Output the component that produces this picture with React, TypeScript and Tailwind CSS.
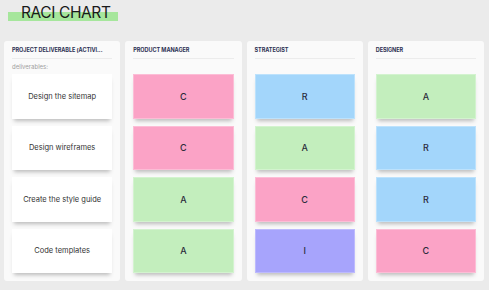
import React from 'react';

type Role = 'R' | 'A' | 'C' | 'I';

const roleStyle: Record<Role, string> = {
  R: 'bg-[#a3d6fb] border-[#bde2fc]',
  A: 'bg-[#c3eebd] border-[#d3f3cf]',
  C: 'bg-[#fba3c6] border-[#fcbdd6]',
  I: 'bg-[#a7a4fc] border-[#bdbafd]',
};

const tasks = ['Design the sitemap', 'Design wireframes', 'Create the style guide', 'Code templates'];

const columns: { title: string; roles: Role[] }[] = [
  { title: 'PRODUCT MANAGER', roles: ['C', 'C', 'A', 'A'] },
  { title: 'STRATEGIST', roles: ['R', 'A', 'C', 'I'] },
  { title: 'DESIGNER', roles: ['A', 'R', 'R', 'C'] },
];

const Panel = ({ title, sub, children }: { title: string; sub?: string; children: React.ReactNode }) => (
  <div className="flex-1 min-w-0 bg-[#fafafa] rounded-[3px] px-2 pb-2 flex flex-col">
    <div className="pt-[5px] pb-[5px] border-b border-[#ececec] h-[18px]">
      <p className="text-[5.5px] leading-[8px] font-bold text-[#2d3154] tracking-[-0.05px] whitespace-nowrap">
        {title}
      </p>
    </div>
    <div className="h-[15px] flex items-center">
      {sub && <p className="text-[6px] text-[#a0a0a0]">{sub}</p>}
    </div>
    <div className="flex flex-col gap-[7px]">{children}</div>
  </div>
);

const App = () => {
  return (
    <div className="w-[489px] h-[290px] bg-[#ebebeb] overflow-hidden font-['Inter',sans-serif]">
      <div className="h-[41px]">
        <span className="inline-block mt-[3px] ml-[8px] pl-[13px] pr-[7px] text-[15.5px] tracking-[-0.4px] leading-[20px] text-[#1a1a1a] bg-[linear-gradient(to_bottom,transparent_9px,#a6e69c_9px,#a6e69c_18px,transparent_18px)]">
          RACI CHART
        </span>
      </div>
      <div className="flex gap-[5px] pl-[4px] pr-[5px]">
        <Panel title="PROJECT DELIVERABLE (ACTIVI..." sub="deliverables:">
          {tasks.map((t) => (
            <div
              key={t}
              className="h-[44.5px] bg-white flex items-center justify-center text-[7.5px] text-[#333] shadow-[0_4px_4px_-2px_rgba(0,0,0,0.25)]"
            >
              {t}
            </div>
          ))}
        </Panel>
        {columns.map((c) => (
          <Panel key={c.title} title={c.title}>
            {c.roles.map((r, i) => (
              <div
                key={i}
                className={`h-[44.5px] border flex items-center justify-center text-[9px] font-medium text-[#2b2b3b] shadow-[0_4px_4px_-2px_rgba(0,0,0,0.25)] ${roleStyle[r]}`}
              >
                {r}
              </div>
            ))}
          </Panel>
        ))}
      </div>
    </div>
  );
};

export default App;
